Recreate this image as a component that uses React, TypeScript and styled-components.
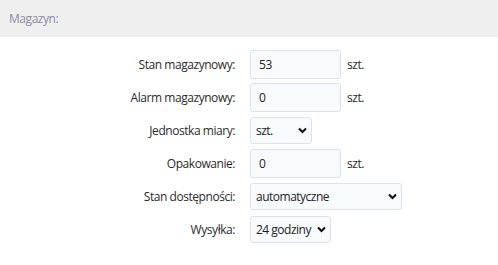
import styled, { createGlobalStyle } from "styled-components"

const GlobalStyle = createGlobalStyle`
    body {
        margin: 0;
        background: #ffffff;
        font-family: "Open Sans", "Noto Sans", sans-serif;
        font-size: 12px;
        letter-spacing: -0.45px;
        color: #2b2b2b;
    }
`

const Section = styled.div`
    width: 498px;
`

const Header = styled.div`
    height: 37px;
    background: #efefef;
    display: flex;
    align-items: center;
    padding-left: 9px;
    color: #8b8aa3;
    font-size: 12px;
`

const Form = styled.div`
    display: grid;
    grid-template-columns: 235px auto;
    column-gap: 15px;
    row-gap: 4px;
    padding-top: 13px;
    align-items: center;
`

const Label = styled.label`
    text-align: right;
    color: #2b2b2b;
    line-height: 29px;
`

const Field = styled.div`
    display: flex;
    align-items: center;
    height: 29px;
`

const TextInput = styled.input`
    box-sizing: border-box;
    width: 91px;
    height: 29px;
    border: 1px solid #dce2e8;
    border-radius: 3px;
    background: #f8fbfe;
    padding: 0 8px;
    font-family: inherit;
    font-size: 12px;
    letter-spacing: inherit;
    color: #222;
    outline: none;
`

const Unit = styled.span`
    margin-left: 6px;
    color: #2b2b2b;
`

const SelectBox = styled.div<{ $width: number }>`
    position: relative;
    width: ${p => p.$width}px;
    height: 27px;
`

const Select = styled.select`
    box-sizing: border-box;
    appearance: none;
    width: 100%;
    height: 100%;
    border: 1px solid #dce2e8;
    border-radius: 3px;
    background: #f8fbfe;
    padding: 0 12px 0 5px;
    font-family: inherit;
    font-size: 12px;
    letter-spacing: -0.5px;
    color: #222;
    outline: none;
`

const Chevron = styled.svg`
    position: absolute;
    right: 5px;
    top: 10px;
    width: 9px;
    height: 7px;
    pointer-events: none;
`

const Arrow = () => (
    <Chevron viewBox="0 0 9 7">
        <path d="M1 1.5 L4.5 5 L8 1.5" fill="none" stroke="#111" strokeWidth="2.1" />
    </Chevron>
)

interface IDropdown {
    width: number;
    value: string;
}

const Dropdown = (props: IDropdown) => (
    <SelectBox $width={props.width}>
        <Select defaultValue={props.value}>
            <option>{props.value}</option>
        </Select>
        <Arrow />
    </SelectBox>
)

const App = () => {
    return (
        <Section>
            <GlobalStyle />
            <Header>Magazyn:</Header>
            <Form>
                <Label>Stan magazynowy:</Label>
                <Field>
                    <TextInput defaultValue="53" />
                    <Unit>szt.</Unit>
                </Field>

                <Label>Alarm magazynowy:</Label>
                <Field>
                    <TextInput defaultValue="0" />
                    <Unit>szt.</Unit>
                </Field>

                <Label>Jednostka miary:</Label>
                <Field>
                    <Dropdown width={62} value="szt." />
                </Field>

                <Label>Opakowanie:</Label>
                <Field>
                    <TextInput defaultValue="0" />
                    <Unit>szt.</Unit>
                </Field>

                <Label>Stan dostępności:</Label>
                <Field>
                    <Dropdown width={152} value="automatyczne" />
                </Field>

                <Label>Wysyłka:</Label>
                <Field>
                    <Dropdown width={81} value="24 godziny" />
                </Field>
            </Form>
        </Section>
    )
}

export default App
